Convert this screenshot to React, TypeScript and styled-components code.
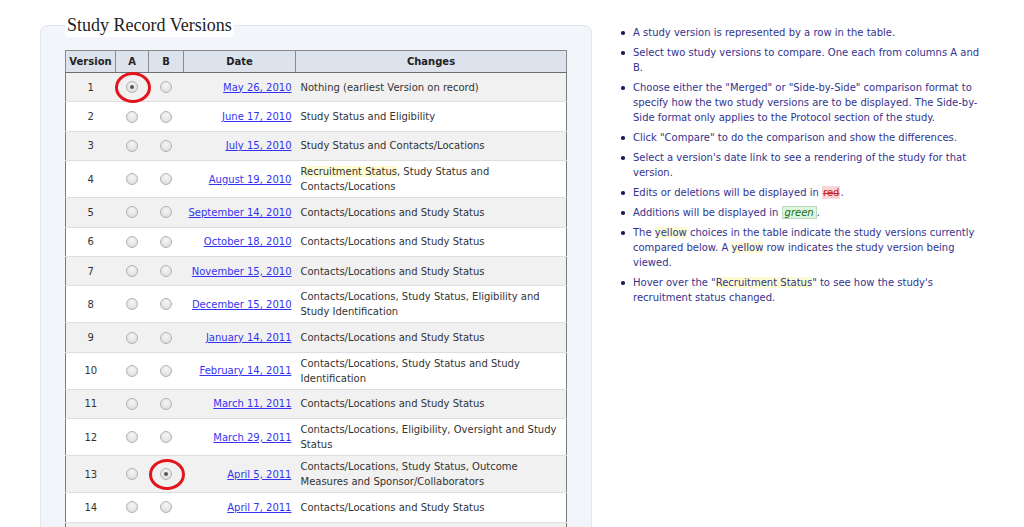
import React from "react";
import styled, { createGlobalStyle } from "styled-components";

const Global = createGlobalStyle`
  html, body { margin: 0; padding: 0; background: #fff; }
  body { font-family: "DejaVu Sans", Verdana, sans-serif; font-size: 10px; color: #333; }
`;

const Page = styled.div`
  display: flex;
  align-items: flex-start;
  gap: 29px;
  padding-left: 40px;
`;

const Panel = styled.fieldset`
  margin: 14px 0 0 0;
  width: 502px;
  padding: 0 24px 20px 24px;
  border: 1px solid #e1e6ed;
  border-radius: 8px;
  background: #f2f5f9;
  min-width: 0;
`;

const Legend = styled.legend`
  font-family: "Liberation Serif", "Times New Roman", serif;
  font-size: 18px;
  line-height: 23px;
  color: #222;
  background: #fff;
  border-radius: 4px;
  padding: 0 2px;
  margin-bottom: 13px;
`;

const Table = styled.table`
  width: 502px;
  border-collapse: collapse;
  border: 1px solid #7a7a7a;
  background: #fff;
  table-layout: fixed;
`;

const Th = styled.th<{ $w?: number }>`
  width: ${(p) => (p.$w ? `${p.$w}px` : "auto")};
  height: 21px;
  padding: 0;
  background: #dde3ed;
  border: 1px solid #8a8a8a;
  border-bottom-color: #6e6e6e;
  font-weight: bold;
  font-size: 10px;
  color: #222;
  text-align: center;
`;

const Tr = styled.tr<{ $odd: boolean }>`
  background: ${(p) => (p.$odd ? "#f1f1f1" : "#fff")};
  border-bottom: 1px solid #dedede;
`;

const Td = styled.td<{ $align?: string }>`
  height: 29.4px;
  box-sizing: border-box;
  padding: 3px 5px;
  line-height: 15px;
  vertical-align: middle;
  text-align: ${(p) => p.$align || "left"};
  color: #333;
`;

const DateCell = styled(Td)`
  padding-right: 4px;
  padding-left: 0;
  white-space: nowrap;
`;

const RadioCell = styled.td`
  position: relative;
  padding: 0;
  text-align: center;
  vertical-align: middle;
`;

const Radio = styled.span<{ $checked?: boolean }>`
  display: inline-block;
  vertical-align: middle;
  width: 12px;
  height: 12px;
  box-sizing: border-box;
  border-radius: 50%;
  border: 1px solid #b4b4b4;
  background: radial-gradient(circle at 50% 35%, #f6f6f6 0%, #e4e4e4 60%, #d4d4d4 100%);
  position: relative;
  &::after {
    content: "";
    display: ${(p) => (p.$checked ? "block" : "none")};
    position: absolute;
    left: 50%;
    top: 50%;
    width: 4px;
    height: 4px;
    margin: -2px 0 0 -2px;
    border-radius: 50%;
    background: #555;
  }
`;

const Ring = styled.span`
  position: absolute;
  left: 50%;
  top: 50%;
  width: 30px;
  height: 25px;
  margin: -15px 0 0 -17.5px;
  border: 3px solid #e2141c;
  border-radius: 50%;
  pointer-events: none;
`;

const DateLink = styled.a`
  color: #3434f0;
  text-decoration: underline;
  cursor: pointer;
`;

const Hl = styled.span`
  background: #fdfbd2;
`;

const Aside = styled.ul`
  list-style: none;
  margin: 25px 0 0 0;
  padding: 0;
  width: 360px;
  color: #33338f;
  line-height: 15px;
`;

const Item = styled.li`
  display: grid;
  grid-template-columns: 12px 1fr;
  margin-bottom: 5px;
  &::before {
    content: "";
    width: 3.5px;
    height: 3.5px;
    border-radius: 50%;
    background: #1c1c5a;
    margin-top: 6px;
  }
`;

const Del = styled.span`
  color: #c22;
  text-decoration: line-through;
  background: #f9d6d6;
  padding: 1px 1px;
`;

const Ins = styled.span`
  color: #1a6b1a;
  font-style: italic;
  background: #ddf6dd;
  border: 1px solid #b7dcb7;
  padding: 0 2px;
`;

type Row = { v: number; date: string; changes: React.ReactNode; a?: boolean; b?: boolean };

const rows: Row[] = [
  { v: 1, date: "May 26, 2010", changes: "Nothing (earliest Version on record)", a: true },
  { v: 2, date: "June 17, 2010", changes: "Study Status and Eligibility" },
  { v: 3, date: "July 15, 2010", changes: "Study Status and Contacts/Locations" },
  {
    v: 4,
    date: "August 19, 2010",
    changes: (
      <>
        <Hl>Recruitment Status</Hl>, Study Status and Contacts/Locations
      </>
    ),
  },
  { v: 5, date: "September 14, 2010", changes: "Contacts/Locations and Study Status" },
  { v: 6, date: "October 18, 2010", changes: "Contacts/Locations and Study Status" },
  { v: 7, date: "November 15, 2010", changes: "Contacts/Locations and Study Status" },
  { v: 8, date: "December 15, 2010", changes: "Contacts/Locations, Study Status, Eligibility and Study Identification" },
  { v: 9, date: "January 14, 2011", changes: "Contacts/Locations and Study Status" },
  { v: 10, date: "February 14, 2011", changes: "Contacts/Locations, Study Status and Study Identification" },
  { v: 11, date: "March 11, 2011", changes: "Contacts/Locations and Study Status" },
  { v: 12, date: "March 29, 2011", changes: "Contacts/Locations, Eligibility, Oversight and Study Status" },
  { v: 13, date: "April 5, 2011", changes: "Contacts/Locations, Study Status, Outcome Measures and Sponsor/Collaborators", b: true },
  { v: 14, date: "April 7, 2011", changes: "Contacts/Locations and Study Status" },
  { v: 15, date: "April 20, 2011", changes: "Contacts/Locations and Study Status" },
];

export default function App() {
  return (
    <>
      <Global />
      <Page>
        <Panel>
          <Legend>Study Record Versions</Legend>
          <Table>
            <thead>
              <tr>
                <Th $w={49}>Version</Th>
                <Th $w={32}>A</Th>
                <Th $w={34}>B</Th>
                <Th $w={111}>Date</Th>
                <Th>Changes</Th>
              </tr>
            </thead>
            <tbody>
              {rows.map((r) => (
                <Tr key={r.v} $odd={r.v % 2 === 1}>
                  <Td $align="center">{r.v}</Td>
                  <RadioCell>
                    <Radio $checked={r.a} />
                    {r.a && <Ring />}
                  </RadioCell>
                  <RadioCell>
                    <Radio $checked={r.b} />
                    {r.b && <Ring />}
                  </RadioCell>
                  <DateCell $align="right">
                    <DateLink>{r.date}</DateLink>
                  </DateCell>
                  <Td>{r.changes}</Td>
                </Tr>
              ))}
            </tbody>
          </Table>
        </Panel>
        <Aside>
          <Item><span>A study version is represented by a row in the table.</span></Item>
          <Item><span>Select two study versions to compare. One each from columns A and B.</span></Item>
          <Item>
            <span>
              Choose either the "Merged" or "Side-by-Side" comparison format to specify how the two study versions
              are to be displayed. The Side-by-Side format only applies to the Protocol section of the study.
            </span>
          </Item>
          <Item><span>Click "Compare" to do the comparison and show the differences.</span></Item>
          <Item><span>Select a version's date link to see a rendering of the study for that version.</span></Item>
          <Item><span>Edits or deletions will be displayed in <Del>red</Del>.</span></Item>
          <Item><span>Additions will be displayed in <Ins>green</Ins>.</span></Item>
          <Item>
            <span>
              The <Hl>yellow</Hl> choices in the table indicate the study versions currently compared below. A{" "}
              <Hl>yellow</Hl> row indicates the study version being viewed.
            </span>
          </Item>
          <Item>
            <span>
              Hover over the "<Hl>Recruitment Status</Hl>" to see how the study's recruitment status changed.
            </span>
          </Item>
        </Aside>
      </Page>
    </>
  );
}
